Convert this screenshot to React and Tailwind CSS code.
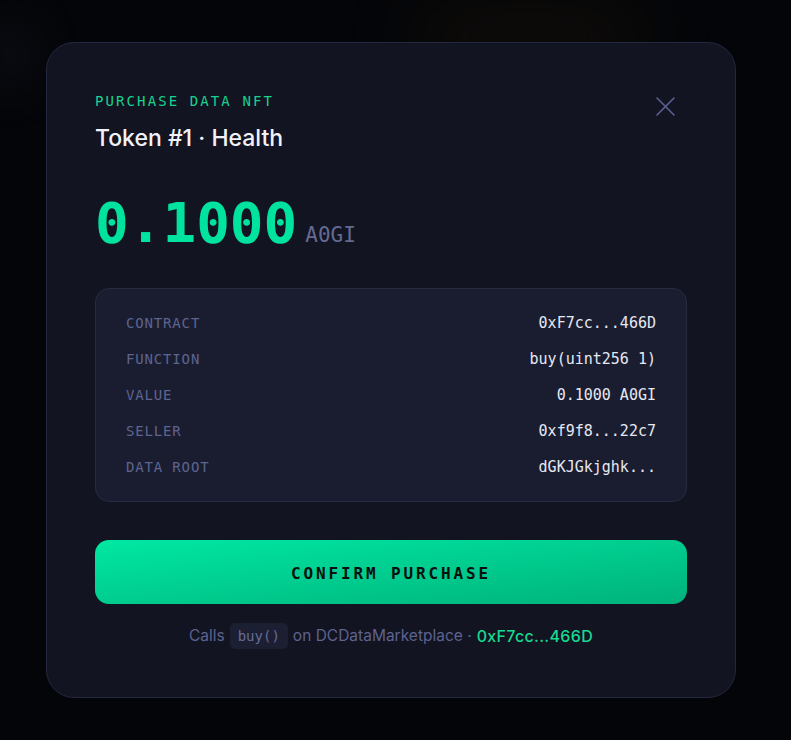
import React from 'react';

const mono = "font-['DejaVu_Sans_Mono','Liberation_Mono',monospace]";
const sans = "font-['Inter','Noto_Sans',sans-serif]";

const rows = [
    {label: 'CONTRACT', value: '0xF7cc...466D'},
    {label: 'FUNCTION', value: 'buy(uint256 1)'},
    {label: 'VALUE', value: '0.1000 A0GI'},
    {label: 'SELLER', value: '0xf9f8...22c7'},
    {label: 'DATA ROOT', value: 'dGKJGkjghk...'},
];

export default function App() {
    return (
        <div className="relative min-h-[740px] w-full bg-[#040509] overflow-hidden flex items-start pl-[46px] pt-[42px]">
            {/* faint glows behind the modal */}
            <div className="absolute left-[420px] top-[20px] w-[220px] h-[40px] rounded-full bg-[#3a2a08] opacity-40 blur-2xl" />
            <div className="absolute -left-[10px] top-[30px] w-[40px] h-[50px] rounded-full bg-[#1a1c26] opacity-60 blur-xl" />

            <div className="relative w-[690px] rounded-[28px] border border-[#242740] bg-[#121421] px-12 pt-12 pb-12">
                <button className="absolute right-[52px] top-[45px] w-9 h-9 flex items-center justify-center text-[#5b6292]">
                    <svg width="19" height="19" viewBox="0 0 19 19" fill="none" stroke="currentColor" strokeWidth="1.6" strokeLinecap="round">
                        <path d="M1 1L18 18M18 1L1 18" />
                    </svg>
                </button>

                {/* header */}
                <div className={`${mono} text-[14px] leading-5 tracking-[0.15em] text-[#16d38f]`}>PURCHASE DATA NFT</div>
                <div className={`${sans} mt-[13px] text-[23px] leading-7 font-medium text-[#f1f2f8]`}>Token #1 · Health</div>

                {/* price */}
                <div className="mt-[39px] flex items-baseline gap-2">
                    <span className={`${mono} text-[56px] leading-[64px] font-bold text-[#00e39e]`}>0.1000</span>
                    <span className={`${mono} text-[21px] text-[#646a93]`}>A0GI</span>
                </div>

                {/* tx details */}
                <div className="mt-[33px] rounded-[14px] border border-[#272b42] bg-[#1a1d2f] px-[30px] py-6 flex flex-col gap-4">
                    {rows.map(r => (
                        <div key={r.label} className="flex items-center justify-between h-5">
                            <span className={`${mono} text-[14px] tracking-[0.06em] text-[#5d6491]`}>{r.label}</span>
                            <span className={`${mono} text-[15px] text-[#e6e8f2]`}>{r.value}</span>
                        </div>
                    ))}
                </div>

                {/* action */}
                <button className={`${mono} mt-[38px] w-full h-16 pt-1 rounded-[14px] bg-gradient-to-br from-[#00e8a2] to-[#00b27c] text-[16px] font-bold tracking-[0.18em] text-[#07100d]`}>
                    CONFIRM PURCHASE
                </button>

                <div className={`${sans} mt-[19px] flex items-center justify-center gap-[5px] text-[15.5px] leading-6 text-[#5d6390]`}>
                    <span>Calls</span>
                    <span className={`${mono} rounded-[5px] bg-[#1c1f32] px-2 py-[1px] text-[14px] text-[#666c96]`}>buy()</span>
                    <span>on DCDataMarketplace ·</span>
                    <span className="text-[16px] tracking-[0.02em] font-medium text-[#17d991]">0xF7cc...466D</span>
                </div>
            </div>
        </div>
    );
}
